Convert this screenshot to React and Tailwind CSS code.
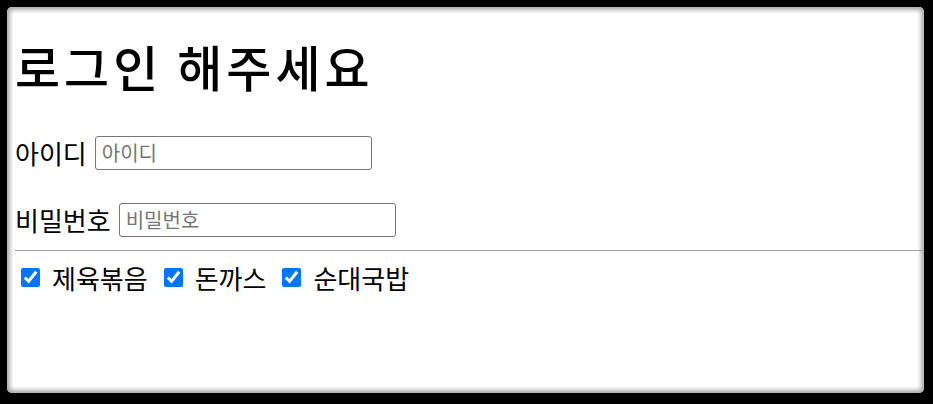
export default function App() {
  const foods = ['제육볶음', '돈까스', '순대국밥']

  return (
    <div className="h-[404px] w-[933px] bg-black p-[7px] pb-[11px] pr-[9px]">
      <div
        className="h-full w-full overflow-hidden rounded-[5px] bg-white pl-[8px] shadow-[inset_0_0_4px_3px_#a8a8a8] text-black"
        style={{ fontFamily: '"Noto Sans CJK KR", "Noto Sans", sans-serif' }}
      >
        {/* 제목 */}
        <h1 className="pt-[24px] text-[49px] font-medium leading-[70px] tracking-[4px]">로그인 해주세요</h1>

        {/* 아이디 */}
        <div className="mt-[32px] flex items-center gap-[8px] text-[26px]">
          <label>아이디</label>
          <input
            placeholder="아이디"
            className="h-[34px] w-[277px] rounded-[3px] border border-[#767676] px-[6px] text-[20px] placeholder:text-[#757575]"
          />
        </div>

        {/* 비밀번호 */}
        <div className="mt-[28px] flex items-center gap-[8px] text-[26px]">
          <label>비밀번호</label>
          <input
            placeholder="비밀번호"
            type="text"
            className="h-[34px] w-[277px] rounded-[3px] border border-[#767676] px-[6px] text-[20px] placeholder:text-[#757575]"
          />
        </div>

        <hr className="mt-[11px] border-t border-[#a0a0a0]" />

        {/* 메뉴 체크 */}
        <div className="mt-[7px] flex items-center text-[26px]">
          {foods.map(f => (
            <label key={f} className="mr-[10px] flex items-center">
              <input type="checkbox" defaultChecked className="ml-[6px] mr-[12px] h-[19px] w-[19px] accent-[#0075ff]" />
              {f}
            </label>
          ))}
        </div>
      </div>
    </div>
  )
}
